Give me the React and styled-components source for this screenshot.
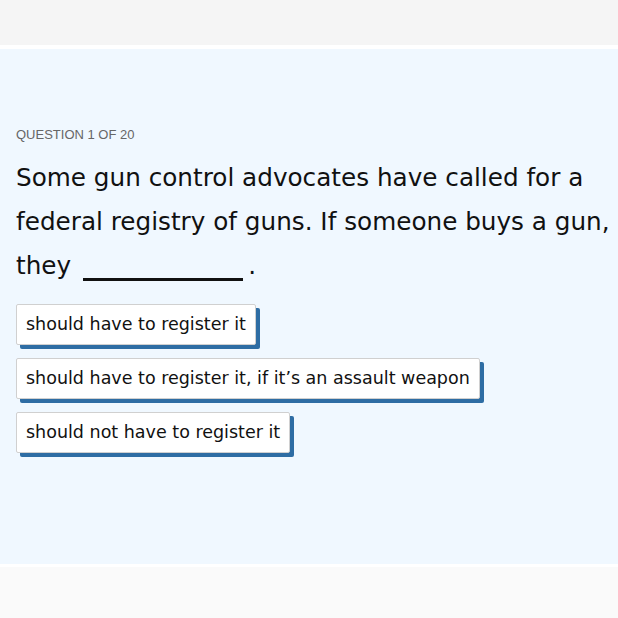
import React from 'react';
import styled, { createGlobalStyle } from 'styled-components';

const GlobalStyle = createGlobalStyle`
  html, body {
    margin: 0;
    padding: 0;
    background: #ffffff;
  }
  body {
    font-family: "DejaVu Sans", Verdana, sans-serif;
  }
`

const answers = [
  'should have to register it',
  'should have to register it, if it\u2019s an assault weapon',
  'should not have to register it',
]

const Page = styled.div`
  width: 618px;
  height: 618px;
  display: flex;
  flex-direction: column;
  overflow: hidden;
`
const TopBar = styled.div`
  height: 45px;
  flex-shrink: 0;
  background-color: #f5f5f5;
  margin-bottom: 4px;
`
const QuizPanel = styled.section`
  height: 515px;
  flex-shrink: 0;
  background-color: #f0f8ff;
  padding: 78px 8px 0 16px;
  box-sizing: border-box;
`
const Counter = styled.div`
  font-family: "Liberation Sans", Arial, sans-serif;
  font-size: 13px;
  line-height: 16px;
  color: #666666;
  text-transform: uppercase;
`
const Prompt = styled.p`
  margin: 13px 0 0;
  font-size: 24.7px;
  line-height: 44px;
  color: #111111;
`
const Blank = styled.span`
  display: inline-block;
  width: 160px;
  height: 3px;
  background: #111111;
  margin: 0 5px 0 12px;
  vertical-align: -7px;
`
const AnswerList = styled.div`
  margin-top: 16px;
  display: flex;
  flex-direction: column;
  align-items: flex-start;
  gap: 13px;
`
const AnswerButton = styled.button`
  font-family: "DejaVu Sans", Verdana, sans-serif;
  font-size: 17.5px;
  line-height: 22px;
  color: #111111;
  background: #ffffff;
  border: 1px solid #d0d0d0;
  border-radius: 2px;
  padding: 8px 9px 9px;
  box-shadow: 4px 4px 0 #2e6da4;
  cursor: pointer;
`
const Footer = styled.div`
  flex: 1;
  margin-top: 3px;
  background-color: #fafafa;
`

function App() {
  return (
    <Page>
      <GlobalStyle />
      <TopBar />
      <QuizPanel>
        <Counter>Question 1 of 20</Counter>
        <Prompt>
          Some gun control advocates have called for a federal registry of guns. If someone buys a gun, they
          <Blank />.
        </Prompt>
        <AnswerList>
          {answers.map((a) => (
            <AnswerButton key={a}>{a}</AnswerButton>
          ))}
        </AnswerList>
      </QuizPanel>
      <Footer />
    </Page>
  );
}

export default App;
